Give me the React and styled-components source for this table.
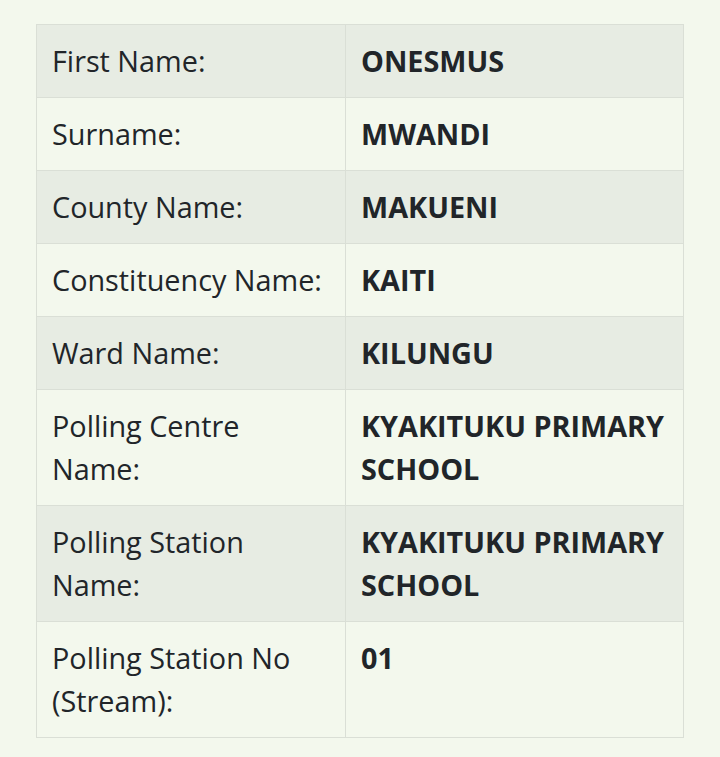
import React from "react";
import styled, { createGlobalStyle } from "styled-components";

const Global = createGlobalStyle`
  html, body { margin: 0; padding: 0; background: #f3f8ed; }
  body { font-family: "Open Sans", "Noto Sans", sans-serif; color: #212529; }
`;

const Page = styled.div`
  padding: 24px 36px 19px 36px;
`;

const Table = styled.table`
  width: 100%;
  table-layout: fixed;
  border-collapse: collapse;
  font-size: 28.8px;
  line-height: 43px;
`;

const LabelCol = styled.col`
  width: 309px;
`;

const Row = styled.tr`
  background: ${(p) => (p.$striped ? "#e7ece3" : "#f3f8ed")};
`;

const Cell = styled.td`
  border: 1px solid #dadfd6;
  padding: 14px 15px 15px 15px;
  vertical-align: top;
  text-align: left;
  font-weight: ${(p) => (p.$label ? 400 : 700)};
`;

const rows = [
  ["First Name:", "ONESMUS"],
  ["Surname:", "MWANDI"],
  ["County Name:", "MAKUENI"],
  ["Constituency Name:", "KAITI"],
  ["Ward Name:", "KILUNGU"],
  ["Polling Centre Name:", "KYAKITUKU PRIMARY SCHOOL"],
  ["Polling Station Name:", "KYAKITUKU PRIMARY SCHOOL"],
  ["Polling Station No (Stream):", "01"],
];

export default function App() {
  return (
    <>
      <Global />
      <Page>
        <Table>
          <colgroup>
            <LabelCol />
            <col />
          </colgroup>
          <tbody>
            {rows.map(([k, v], i) => (
              <Row key={k} $striped={i % 2 === 0}>
                <Cell $label>{k}</Cell>
                <Cell>{v}</Cell>
              </Row>
            ))}
          </tbody>
        </Table>
      </Page>
    </>
  );
}
